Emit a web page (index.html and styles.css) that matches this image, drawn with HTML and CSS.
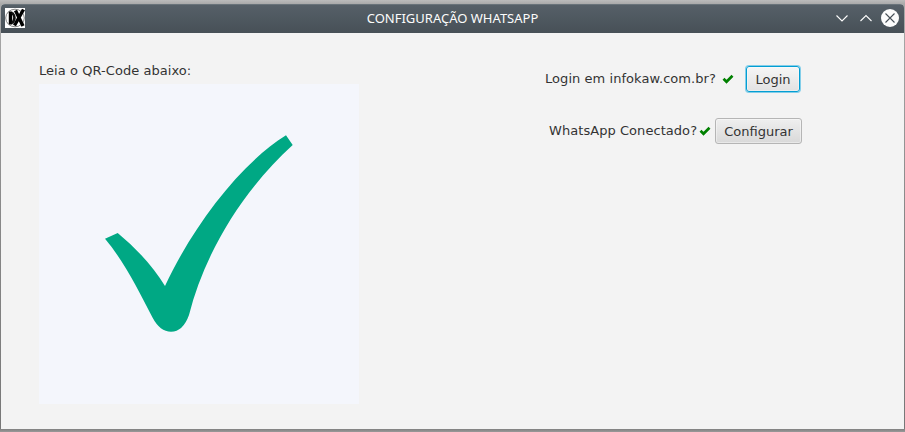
FILE: index.html
```html
<!DOCTYPE html>
<html lang="pt-BR">
<head>
<meta charset="utf-8">
<title>Configuração WhatsApp</title>
<link rel="stylesheet" href="styles.css">
</head>
<body>
<div class="window">
  <header class="titlebar">
    <svg class="logo" viewBox="0 0 20 20">
      <rect width="20" height="20" fill="#fff"/>
      <ellipse cx="10" cy="10" rx="9.3" ry="8.800" fill="none" stroke="#777" stroke-width=".9"/>
      <path d="M5.500 3.500v13" fill="none" stroke="#000" stroke-width="3.400"/>
      <path d="M7 4.500q5 5.500 0 11" fill="none" stroke="#111" stroke-width="2.600"/>
      <path d="M10.500 2.500L18 18M18.500 1.500L9.500 17.500" fill="none" stroke="#000" stroke-width="3.400"/>
    </svg>
    <h1 class="title">CONFIGURAÇÃO WHATSAPP</h1>
    <div class="controls">
      <svg viewBox="0 0 66 20" width="66" height="20" fill="none">
        <path d="M1.500 7.500l5.500 5.500 5.500-5.500M25.500 13l5.500-5.500 5.500 5.500" stroke="#fcfcfc" stroke-width="1.100"/>
        <circle cx="55" cy="10" r="9" fill="#fcfcfc"/>
        <path d="M50.500 5.500l9 9M59.500 5.500l-9 9" stroke="#475057" stroke-width="1.100"/>
      </svg>
    </div>
  </header>
  <main class="content">
    <section class="qr">
      <p class="label">Leia o QR-Code abaixo:</p>
      <svg class="code" viewBox="0 0 320 320">
        <path fill="#00a884" d="M66 154.700L78.700 149Q108 173 126 202C154 142 201 80 247 51.300L253.700 61C202 108 165 171 150 231Q144 247.700 132 247.700Q121 247.700 113.500 233.500C99 205 84 176 66 154.700Z"/>
      </svg>
    </section>
    <section class="status">
      <div class="row login">
        <span class="label">Login em infokaw.com.br?</span>
        <svg class="tick" viewBox="0 0 12 10"><path d="M1.500 4.800l3 3L10.500 1.800" fill="none" stroke="#008000" stroke-width="2.700"/></svg>
        <button class="button focused">Login</button>
      </div>
      <div class="row connect">
        <span class="label">WhatsApp Conectado?</span>
        <svg class="tick" viewBox="0 0 12 10"><path d="M1.500 4.800l3 3L10.500 1.800" fill="none" stroke="#008000" stroke-width="2.700"/></svg>
        <button class="button">Configurar</button>
      </div>
    </section>
  </main>
</div>
</body>
</html>
```
FILE: styles.css
```css
* { box-sizing: border-box; }
body {
  margin: 0;
  height: 432px;
  padding: 4px 1px 3px;
  overflow: hidden;
  background: linear-gradient(#bcbcbc 0, #aaa 4px, #888 50%, #777 428px, #999 432px);
  font-family: "DejaVu Sans", sans-serif;
  font-size: 13px;
  color: #333;
}
.window {
  height: 425px;
  border-radius: 4px 4px 0 0;
  overflow: hidden;
  background: #f3f3f3;
}
.titlebar {
  height: 29px;
  display: grid;
  grid-template-columns: 80px 1fr 80px;
  align-items: center;
  padding-bottom: 2px;
  background: linear-gradient(#566068, #475057);
  border-top: 1px solid #69737a;
}
.logo { width: 20px; height: 20px; margin-left: 4px; }
.title {
  margin: 0;
  text-align: center;
  font: 400 13px/18px "Noto Sans", sans-serif;
  color: #fcfcfc;
}
.controls { display: flex; justify-content: flex-end; padding-right: 3px; }
.content { display: flex; padding: 30px 38px 0; }
.label { margin: 0; line-height: 16px; white-space: nowrap; letter-spacing: .055px; }
.qr { width: 320px; }
.code { display: block; width: 320px; height: 320px; margin-top: 5px; background: #f4f6fc; }
.status { margin: 2px 0 0 186px; }
.row { display: flex; height: 28px; align-items: center; }
.row .label { flex: none; width: 172px; }
.connect { margin: 24px 0 0 4px; }
.connect .label { width: 148px; }
.tick { flex: none; width: 12px; height: 10px; margin-left: 5px; }
.connect .tick { margin-left: 2px; }
.button {
  height: 26px;
  width: 87px;
  padding: 1px 0 0;
  margin-left: 4px;
  border: 1px solid #b5b5b5;
  border-radius: 3px;
  background: linear-gradient(#efefef, #d9d9d9);
  box-shadow: inset 0 0 0 1px rgba(255,255,255,.4);
  font: inherit;
  color: #333;
}
.focused {
  width: 54px;
  margin-left: 12px;
  border-color: #039ed3;
  background: linear-gradient(#f6f6f6, #e2e2e2);
  box-shadow: 0 0 0 1px #83cee9, inset 0 0 0 1px rgba(255,255,255,.4);
}
```
